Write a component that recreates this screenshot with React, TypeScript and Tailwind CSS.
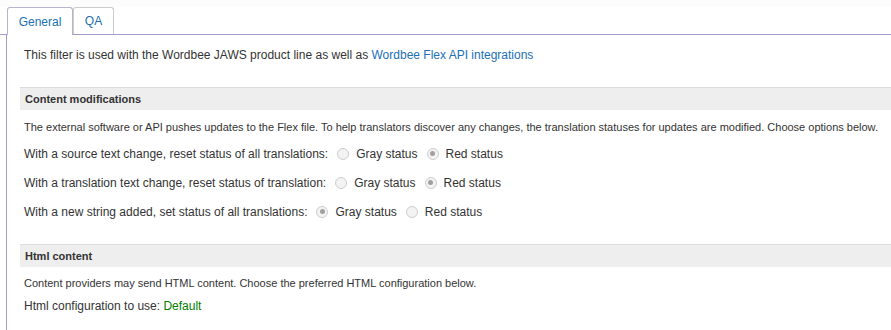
import React from 'react';

const Radio = ({ checked }: { checked?: boolean }) => (
    <span className="inline-flex w-[12px] h-[12px] rounded-full border border-[#cdcdcd] bg-[#f3f3f3] items-center justify-center ml-[9px] mr-[7px] shrink-0">
        {checked && <span className="w-[5px] h-[5px] rounded-full bg-[#a0a0a0]" />}
    </span>
);

interface RowProps {
    label: string;
    value: 'gray' | 'red';
}

const StatusRow: React.FC<RowProps> = ({ label, value }) => (
    <div className="flex items-center h-[29px] text-[12px] text-[#333]">
        <span>{label}</span>
        <Radio checked={value === 'gray'} />
        <span>Gray status</span>
        <Radio checked={value === 'red'} />
        <span>Red status</span>
    </div>
);

const SectionHeader = ({ title }: { title: string }) => (
    <div className="ml-[13px] h-[23px] border-t border-[#dcdcdc] bg-[#eeeeee] flex items-center px-[5px] text-[11px] font-bold text-[#333]">
        {title}
    </div>
);

export default function App() {
    return (
        <div className="w-[891px] h-[330px] bg-white overflow-hidden" style={{ fontFamily: '"Liberation Sans", Arial, sans-serif' }}>
            <div className="h-[7px] bg-[#fcfcfc]" />
            {/* tabs */}
            <div className="flex pl-[7px] h-[28px] border-b border-[#a59bc8]">
                <div className="relative -mb-px w-[66px] border border-b-0 border-[#b9b3cf] rounded-t-[3px] bg-white flex items-center justify-center text-[12px] text-[#1a6fb5]">
                    General
                </div>
                <div className="w-[41px] border border-b-0 border-[#cccccc] rounded-t-[3px] bg-white flex items-center justify-center text-[12px] text-[#1a6fb5]">
                    QA
                </div>
            </div>
            <div className="ml-[6px] border-l border-[#a59bc8] h-[295px]">
                <div className="pl-[17px] pt-[11px] h-[52px] text-[12px] text-[#333]">
                    This filter is used with the Wordbee JAWS product line as well as{' '}
                    <span className="text-[#1a6fb5]">Wordbee Flex API integrations</span>
                </div>
                <SectionHeader title="Content modifications" />
                <div className="pl-[17px]">
                    <div className="pt-[9px] h-[29px] text-[11px] text-[#333]">
                        The external software or API pushes updates to the Flex file. To help translators discover any changes, the translation statuses for updates are modified. Choose options below.
                    </div>
                    <StatusRow label="With a source text change, reset status of all translations:" value="red" />
                    <StatusRow label="With a translation text change, reset status of translation:" value="red" />
                    <StatusRow label="With a new string added, set status of all translations:" value="gray" />
                </div>
                <div className="h-[18px]" />
                <SectionHeader title="Html content" />
                <div className="pl-[17px]">
                    <div className="pt-[8px] h-[30px] text-[11px] text-[#333]">
                        Content providers may send HTML content. Choose the preferred HTML configuration below.
                    </div>
                    <div className="text-[12px] text-[#333]">
                        Html configuration to use: <span className="text-[#008000]">Default</span>
                    </div>
                </div>
            </div>
        </div>
    );
}
